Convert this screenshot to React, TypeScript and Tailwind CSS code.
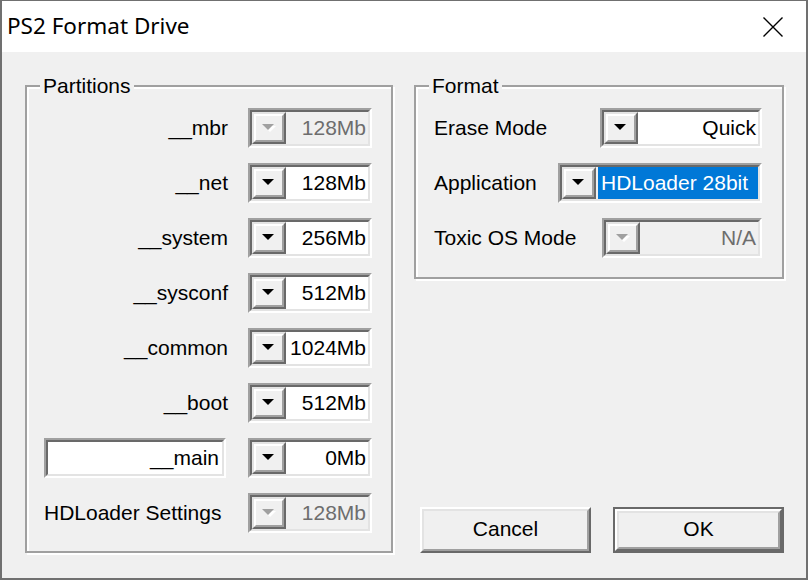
import React from 'react';

const sans = "font-['Liberation_Sans',Arial,sans-serif]";

function Arrow({ disabled }: { disabled?: boolean }) {
  return (
    <svg width="14" height="8" viewBox="0 0 14 8">
      {disabled && <polygon points="2,2 14,2 8,8" fill="#ffffff" />}
      <polygon points="0,0 12,0 6,6" fill={disabled ? '#a0a0a0' : '#000000'} />
    </svg>
  );
}

function Sunken({ className = '', children }: { className?: string; children: React.ReactNode }) {
  return (
    <div className={`border-2 border-t-[#a0a0a0] border-l-[#a0a0a0] border-r-white border-b-white ${className}`}>
      <div className="flex h-full border-2 border-t-[#696969] border-l-[#696969] border-r-[#e3e3e3] border-b-[#e3e3e3]">
        {children}
      </div>
    </div>
  );
}

function Combo({
  value,
  className,
  disabled,
  selected,
}: {
  value: string;
  className: string;
  disabled?: boolean;
  selected?: boolean;
}) {
  return (
    <Sunken className={`h-[40px] shrink-0 ${className}`}>
      <div className="w-[34px] shrink-0 border-2 border-t-[#e3e3e3] border-l-[#e3e3e3] border-r-[#696969] border-b-[#696969] bg-[#f0f0f0]">
        <div className="flex h-full w-full items-center justify-center border-2 border-t-white border-l-white border-r-[#a0a0a0] border-b-[#a0a0a0]">
          <Arrow disabled={disabled} />
        </div>
      </div>
      {selected ? (
        <div className="ml-[2px] flex min-w-0 flex-1 items-center overflow-hidden whitespace-nowrap bg-[#0078d7] pb-[1px] pl-[3px] leading-[24px] text-white">
          {value}
        </div>
      ) : (
        <div
          className={`flex min-w-0 flex-1 items-center justify-end overflow-hidden whitespace-nowrap pb-[1px] pr-[2px] leading-[24px] ${
            disabled ? 'bg-[#f0f0f0] text-[#6d6d6d]' : 'bg-white text-black'
          }`}
        >
          {value}
        </div>
      )}
    </Sunken>
  );
}

function Group({ title, className, children }: { title: string; className: string; children: React.ReactNode }) {
  return (
    <div
      className={`flex flex-col border-2 border-[#a0a0a0] shadow-[inset_2px_2px_0_#fff,2px_2px_0_#fff] ${className}`}
    >
      <div className="-mt-[13px] ml-[13px] h-[24px] self-start bg-[#f0f0f0] px-[3px] leading-[24px]">{title}</div>
      {children}
    </div>
  );
}

function Button({ label, isDefault }: { label: string; isDefault?: boolean }) {
  return (
    <button className={`h-[46px] w-[172px] ${isDefault ? 'border-2 border-[#696969]' : ''}`}>
      <div className="h-full w-full border-2 border-t-white border-l-white border-r-[#696969] border-b-[#696969]">
        <div className="flex h-full w-full items-center justify-center border-2 border-t-[#e3e3e3] border-l-[#e3e3e3] border-r-[#a0a0a0] border-b-[#a0a0a0] bg-[#f0f0f0] pb-[2px] leading-[24px]">
          {label}
        </div>
      </div>
    </button>
  );
}

const partitions = [
  { label: '__mbr', value: '128Mb', disabled: true },
  { label: '__net', value: '128Mb' },
  { label: '__system', value: '256Mb' },
  { label: '__sysconf', value: '512Mb' },
  { label: '__common', value: '1024Mb' },
  { label: '__boot', value: '512Mb' },
];

export default function App() {
  return (
    <div className={`flex h-[580px] w-[808px] flex-col border-x-2 border-t border-b-2 border-[#707070] text-[21px] text-black ${sans}`}>
      {/* title bar */}
      <div className="flex h-[51px] shrink-0 items-center justify-between bg-white pl-[5px] pr-[23px]">
        <span className="font-['Noto_Sans',sans-serif] text-[22.5px] leading-none">PS2 Format Drive</span>
        <svg width="20" height="20" viewBox="0 0 20 20">
          <path d="M0.5 0.5 L19.5 19.5 M19.5 0.5 L0.5 19.5" stroke="#000" strokeWidth="1.4" />
        </svg>
      </div>

      <div className="flex flex-1 items-start bg-[#f0f0f0] pl-[23px] pt-[33px]">
        <Group title="Partitions" className="h-[468px] w-[368px]">
          <div className="mt-[10px] flex flex-col gap-[15px] pl-[17px] pr-[19px]">
            {partitions.map((p) => (
              <div key={p.label} className="flex h-[40px] items-center">
                <div className="w-[184px] text-right leading-[24px]">{p.label}</div>
                <Combo value={p.value} disabled={p.disabled} className="ml-[20px] w-[124px]" />
              </div>
            ))}
            <div className="flex h-[40px] items-center">
              <Sunken className="h-[40px] w-[182px]">
                <div className="flex flex-1 items-center justify-end bg-white pr-[3px] leading-[24px]">__main</div>
              </Sunken>
              <Combo value="0Mb" className="ml-[22px] w-[124px]" />
            </div>
            <div className="flex h-[40px] items-center">
              <div className="w-[184px] whitespace-nowrap leading-[24px]">HDLoader Settings</div>
              <Combo value="128Mb" disabled className="ml-[20px] w-[124px]" />
            </div>
          </div>
        </Group>

        <div className="ml-[21px] flex h-[468px] w-[370px] flex-col">
          <Group title="Format" className="h-[194px] w-[370px]">
            <div className="mt-[10px] flex flex-col gap-[15px] pl-[18px] pr-[20px]">
              <div className="flex h-[40px] items-center justify-between">
                <span className="leading-[24px]">Erase Mode</span>
                <Combo value="Quick" className="w-[162px]" />
              </div>
              <div className="flex h-[40px] items-center justify-between">
                <span className="leading-[24px]">Application</span>
                <Combo value="HDLoader 28bit" selected className="w-[204px]" />
              </div>
              <div className="flex h-[40px] items-center justify-between">
                <span className="leading-[24px]">Toxic OS Mode</span>
                <Combo value="N/A" disabled className="w-[160px]" />
              </div>
            </div>
          </Group>
          <div className="mt-auto flex gap-[22px] pl-[6px]">
            <Button label="Cancel" />
            <Button label="OK" isDefault />
          </div>
        </div>
      </div>
    </div>
  );
}
